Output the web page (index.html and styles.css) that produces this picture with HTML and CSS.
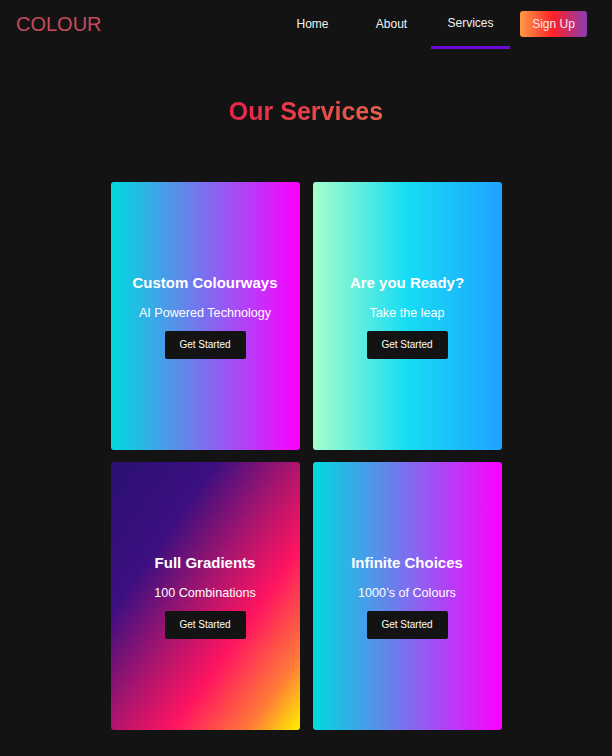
FILE: index.html
```html
<!DOCTYPE html>
<html lang="en">
<head>
<meta charset="utf-8">
<title>Colour</title>
<link rel="stylesheet" href="styles.css">
</head>
<body>
<header class="nav">
  <a class="logo" href="#">COLOUR</a>
  <ul class="menu">
    <li><a class="link" href="#">Home</a></li>
    <li><a class="link" href="#">About</a></li>
    <li><a class="link active" href="#">Services</a></li>
  </ul>
  <a class="signup" href="#">Sign Up</a>
</header>
<main class="services">
  <h1 class="heading">Our Services</h1>
  <div class="grid">
    <div class="card card-1">
      <h2 class="card-title">Custom Colourways</h2>
      <p class="card-sub">AI Powered Technology</p>
      <button class="btn">Get Started</button>
    </div>
    <div class="card card-2">
      <h2 class="card-title">Are you Ready?</h2>
      <p class="card-sub">Take the leap</p>
      <button class="btn">Get Started</button>
    </div>
    <div class="card card-3">
      <h2 class="card-title">Full Gradients</h2>
      <p class="card-sub">100 Combinations</p>
      <button class="btn">Get Started</button>
    </div>
    <div class="card card-4">
      <h2 class="card-title">Infinite Choices</h2>
      <p class="card-sub">1000’s of Colours</p>
      <button class="btn">Get Started</button>
    </div>
  </div>
</main>
</body>
</html>
```
FILE: styles.css
```css
* { box-sizing: border-box; }
html, body {
  margin: 0;
  padding: 0;
  background: #131313;
  font-family: "Liberation Sans", Arial, sans-serif;
  color: #fff;
}
.nav {
  display: flex;
  align-items: center;
  height: 50px;
  padding: 0 25px 0 16px;
}
.logo {
  font-size: 20px;
  line-height: 24px;
  color: #c64a5d;
  text-decoration: none;
  margin-top: -3px;
}
.menu {
  list-style: none;
  display: flex;
  margin: 0 0 0 auto;
  padding: 0;
  align-self: flex-start;
}
.menu li {
  width: 79px;
  display: flex;
  justify-content: center;
}
.link {
  display: block;
  font-size: 12px;
  line-height: 20px;
  padding: 14px 0 12px;
  color: #f2f2f2;
  text-decoration: none;
  border-bottom: 3px solid transparent;
}
.link.active {
  width: 79px;
  text-align: center;
  padding: 13px 0 13px;
  border-bottom-color: #6c0ad6;
}
.signup {
  margin-left: 10px;
  width: 67px;
  height: 26px;
  border-radius: 3px;
  background: linear-gradient(to right, #ff9a44, #fb2129 50%, #8b3db2);
  color: #fde6ec;
  font-size: 12px;
  line-height: 26px;
  text-align: center;
  text-decoration: none;
  margin-top: -2px;
}
.services {
  padding-top: 46px;
  padding-bottom: 26px;
}
.heading {
  margin: 0 auto;
  text-align: center;
  font-size: 25px;
  line-height: 30px;
  font-weight: bold;
  width: max-content;
  background: linear-gradient(to right, #e8234b, #e6634a);
  -webkit-background-clip: text;
  background-clip: text;
  color: transparent;
}
.grid {
  margin: 56px auto 0;
  width: 391px;
  display: grid;
  grid-template-columns: 189px 189px;
  grid-auto-rows: 268px;
  column-gap: 13px;
  row-gap: 12px;
}
.card {
  border-radius: 3px;
  display: flex;
  flex-direction: column;
  align-items: center;
  justify-content: center;
}
.card-1, .card-4 {
  background: linear-gradient(to right, #00dbde, #fc00ff);
}
.card-2 {
  background: linear-gradient(to right, #a6ffcb, #16dcf4 50%, #1fa2ff);
}
.card-3 {
  background: linear-gradient(to bottom right, #2a1172 0%, #3c0f80 28%, #a6156e 48%, #ff1361 66%, #ff7a38 86%, #fff200 100%);
}
.card-title {
  margin: 0;
  font-size: 15px;
  line-height: 18px;
  font-weight: bold;
  color: #fff;
}
.card-sub {
  margin: 13px 0 0;
  font-size: 12.6px;
  line-height: 16px;
  color: #fff;
}
.btn {
  margin-top: 10px;
  width: 81px;
  height: 28px;
  border: none;
  border-radius: 2px;
  background: #131313;
  color: #fff;
  font-family: "Liberation Sans", Arial, sans-serif;
  font-size: 10px;
  padding: 0;
}
```
